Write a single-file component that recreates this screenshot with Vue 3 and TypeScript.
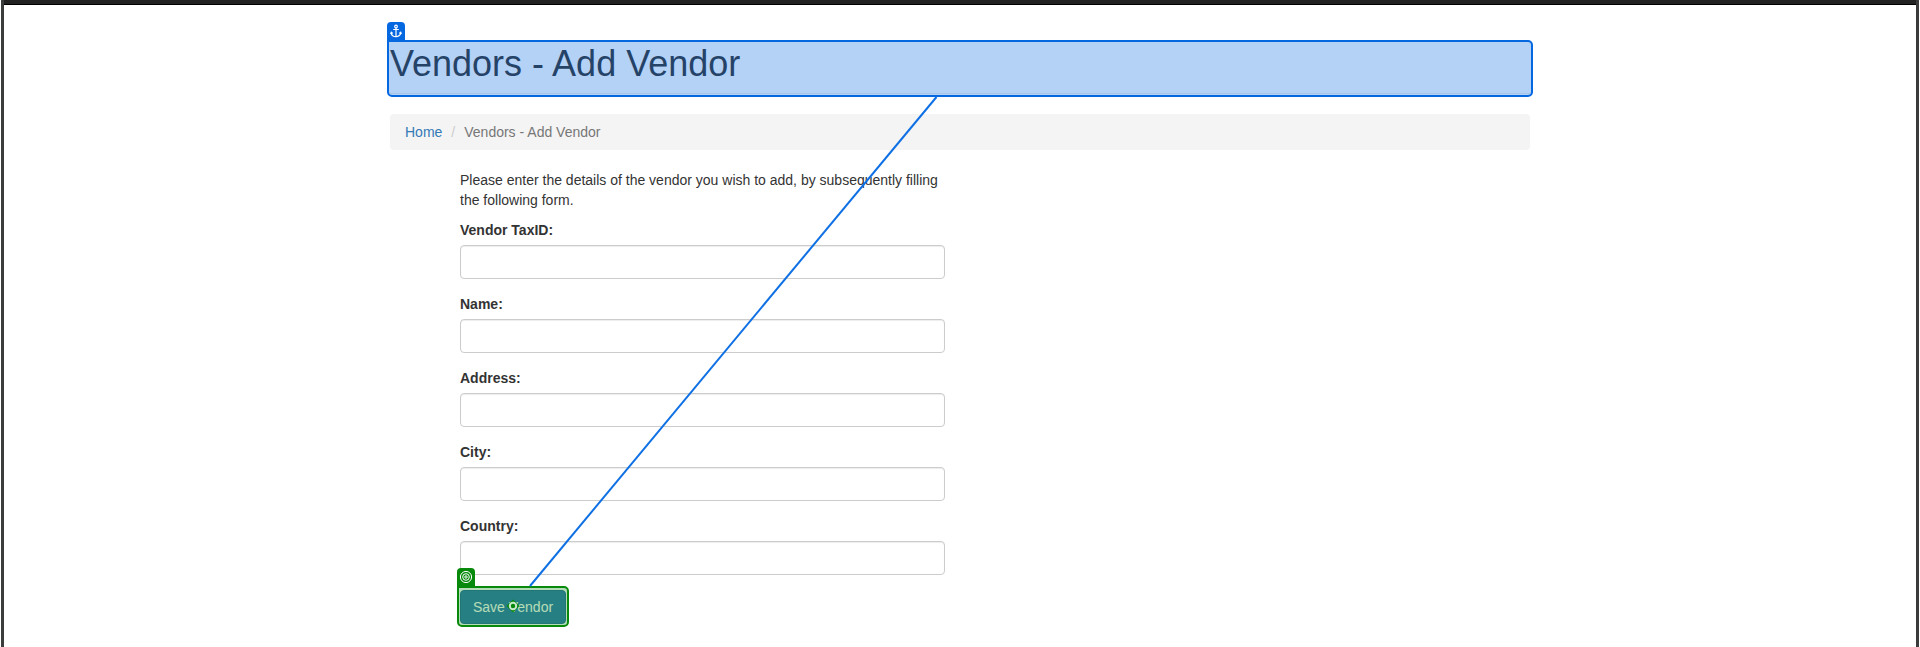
<script setup lang="ts">
const fields: string[] = ['Vendor TaxID:', 'Name:', 'Address:', 'City:', 'Country:']
</script>

<template>
  <div class="screen">
    <div class="page">
      <main class="container">
        <header class="page-header">
          <h1>Vendors - Add Vendor</h1>
          <div class="marker anchor">
            <span class="tab">
              <svg width="12" height="14" viewBox="0 0 12 14" fill="none" stroke="#fff" stroke-width="1.2">
                <circle cx="6" cy="2.5" r="1.3" />
                <path d="M6 3.8V12.4M3.2 5.5h5.6M1.3 8.4C1.3 11 3.4 12.6 6 12.6s4.7-1.6 4.7-4.2M.6 10l.7-1.8L2.8 9.4M11.4 10l-.7-1.8-1.5 1.2" />
              </svg>
            </span>
          </div>
        </header>
        <nav class="breadcrumb">
          <a>Home</a><span class="sep">/</span><span>Vendors - Add Vendor</span>
        </nav>
        <form class="form" @submit.prevent>
          <p>Please enter the details of the vendor you wish to add, by subsequently filling the following form.</p>
          <div v-for="field in fields" :key="field" class="group">
            <label>{{ field }}</label>
            <input type="text" :aria-label="field" />
          </div>
          <div class="action">
            <button type="submit">Save Vendor</button>
            <div class="marker target">
              <span class="tab">
                <svg width="14" height="14" viewBox="0 0 14 14" fill="none" stroke="#fff">
                  <circle cx="7" cy="7" r="5.6" /><circle cx="7" cy="7" r="3.3" /><circle cx="7" cy="7" r="1.2" />
                </svg>
              </span>
              <svg class="point" width="14" height="14" viewBox="0 0 14 14">
                <path d="M7 .5 13.5 7 7 13.5.5 7Z" fill="#078a0c" />
                <circle cx="7" cy="7" r="3.2" fill="#078a0c" stroke="#c9e8ca" stroke-width="2" />
              </svg>
            </div>
          </div>
        </form>
      </main>
    </div>
    <svg class="link" width="1920" height="647" viewBox="0 0 1920 647">
      <line x1="936.5" y1="97" x2="530" y2="586" stroke="#0f70e4" stroke-width="2" />
    </svg>
  </div>
</template>

<style>
body { margin: 0; overflow: hidden; background: #fff; }
</style>

<style scoped>
* { box-sizing: border-box; }
.screen {
  position: relative;
  height: 647px;
  margin: 0 1px;
  overflow: hidden;
  border-left: 3px solid #3b3d3d;
  border-right: 3px solid #3b3b3b;
  font: 14px/20px "Liberation Sans", Arial, sans-serif;
  color: #333;
}
.page {
  height: 100%;
  border-top: 4px solid #222;
  background: #fff;
  box-shadow: inset 0 1px #000;
}
.container { width: 1140px; margin-left: 386px; padding-top: 40px; }
.page-header { position: relative; height: 50px; margin-bottom: 20px; border-bottom: 1px solid #eee; }
h1 { margin: 0; font-size: 36px; line-height: 39.6px; font-weight: 400; }
.marker { position: absolute; z-index: 2; border: 2px solid; border-radius: 0 5px 5px 5px; }
.anchor { inset: -4px -3px -4px -3px; border-color: #0668e1; background: rgba(6, 104, 225, .3); }
.target { inset: -4px -3px -3px -3px; border-color: #078a0c; background: rgba(7, 138, 12, .3); }
.tab {
  position: absolute;
  left: -2px;
  top: -20px;
  width: 18px;
  height: 18px;
  display: flex;
  align-items: center;
  justify-content: center;
  border-radius: 4px 4px 0 0;
}
.anchor .tab { background: #0668e1; }
.target .tab { background: #078a0c; }
.breadcrumb { display: flex; height: 36px; padding: 8px 15px; margin-bottom: 20px; border-radius: 4px; background: #f4f4f4; color: #777; }
.breadcrumb a { color: #337ab7; }
.sep { padding: 0 9px; color: #ccc; }
.form { width: 485px; margin-left: 70px; }
p { margin: 0 0 10px; }
.group { margin-bottom: 15px; }
label { display: block; margin-bottom: 5px; font-weight: 700; }
input {
  display: block;
  width: 100%;
  height: 34px;
  border: 1px solid #ccc;
  border-radius: 4px;
  background: #fff;
  box-shadow: inset 0 1px 1px rgba(0, 0, 0, .075);
}
.action { position: relative; width: 106px; height: 34px; }
button { display: block; width: 106px; height: 34px; padding: 0; border: 1px solid #2e6da4; border-radius: 4px; background: #337ab7; color: #fff; font: inherit; }
.point { position: absolute; left: 47px; top: 11px; }
.link { position: absolute; left: -4px; top: 0; z-index: 3; pointer-events: none; }
</style>
